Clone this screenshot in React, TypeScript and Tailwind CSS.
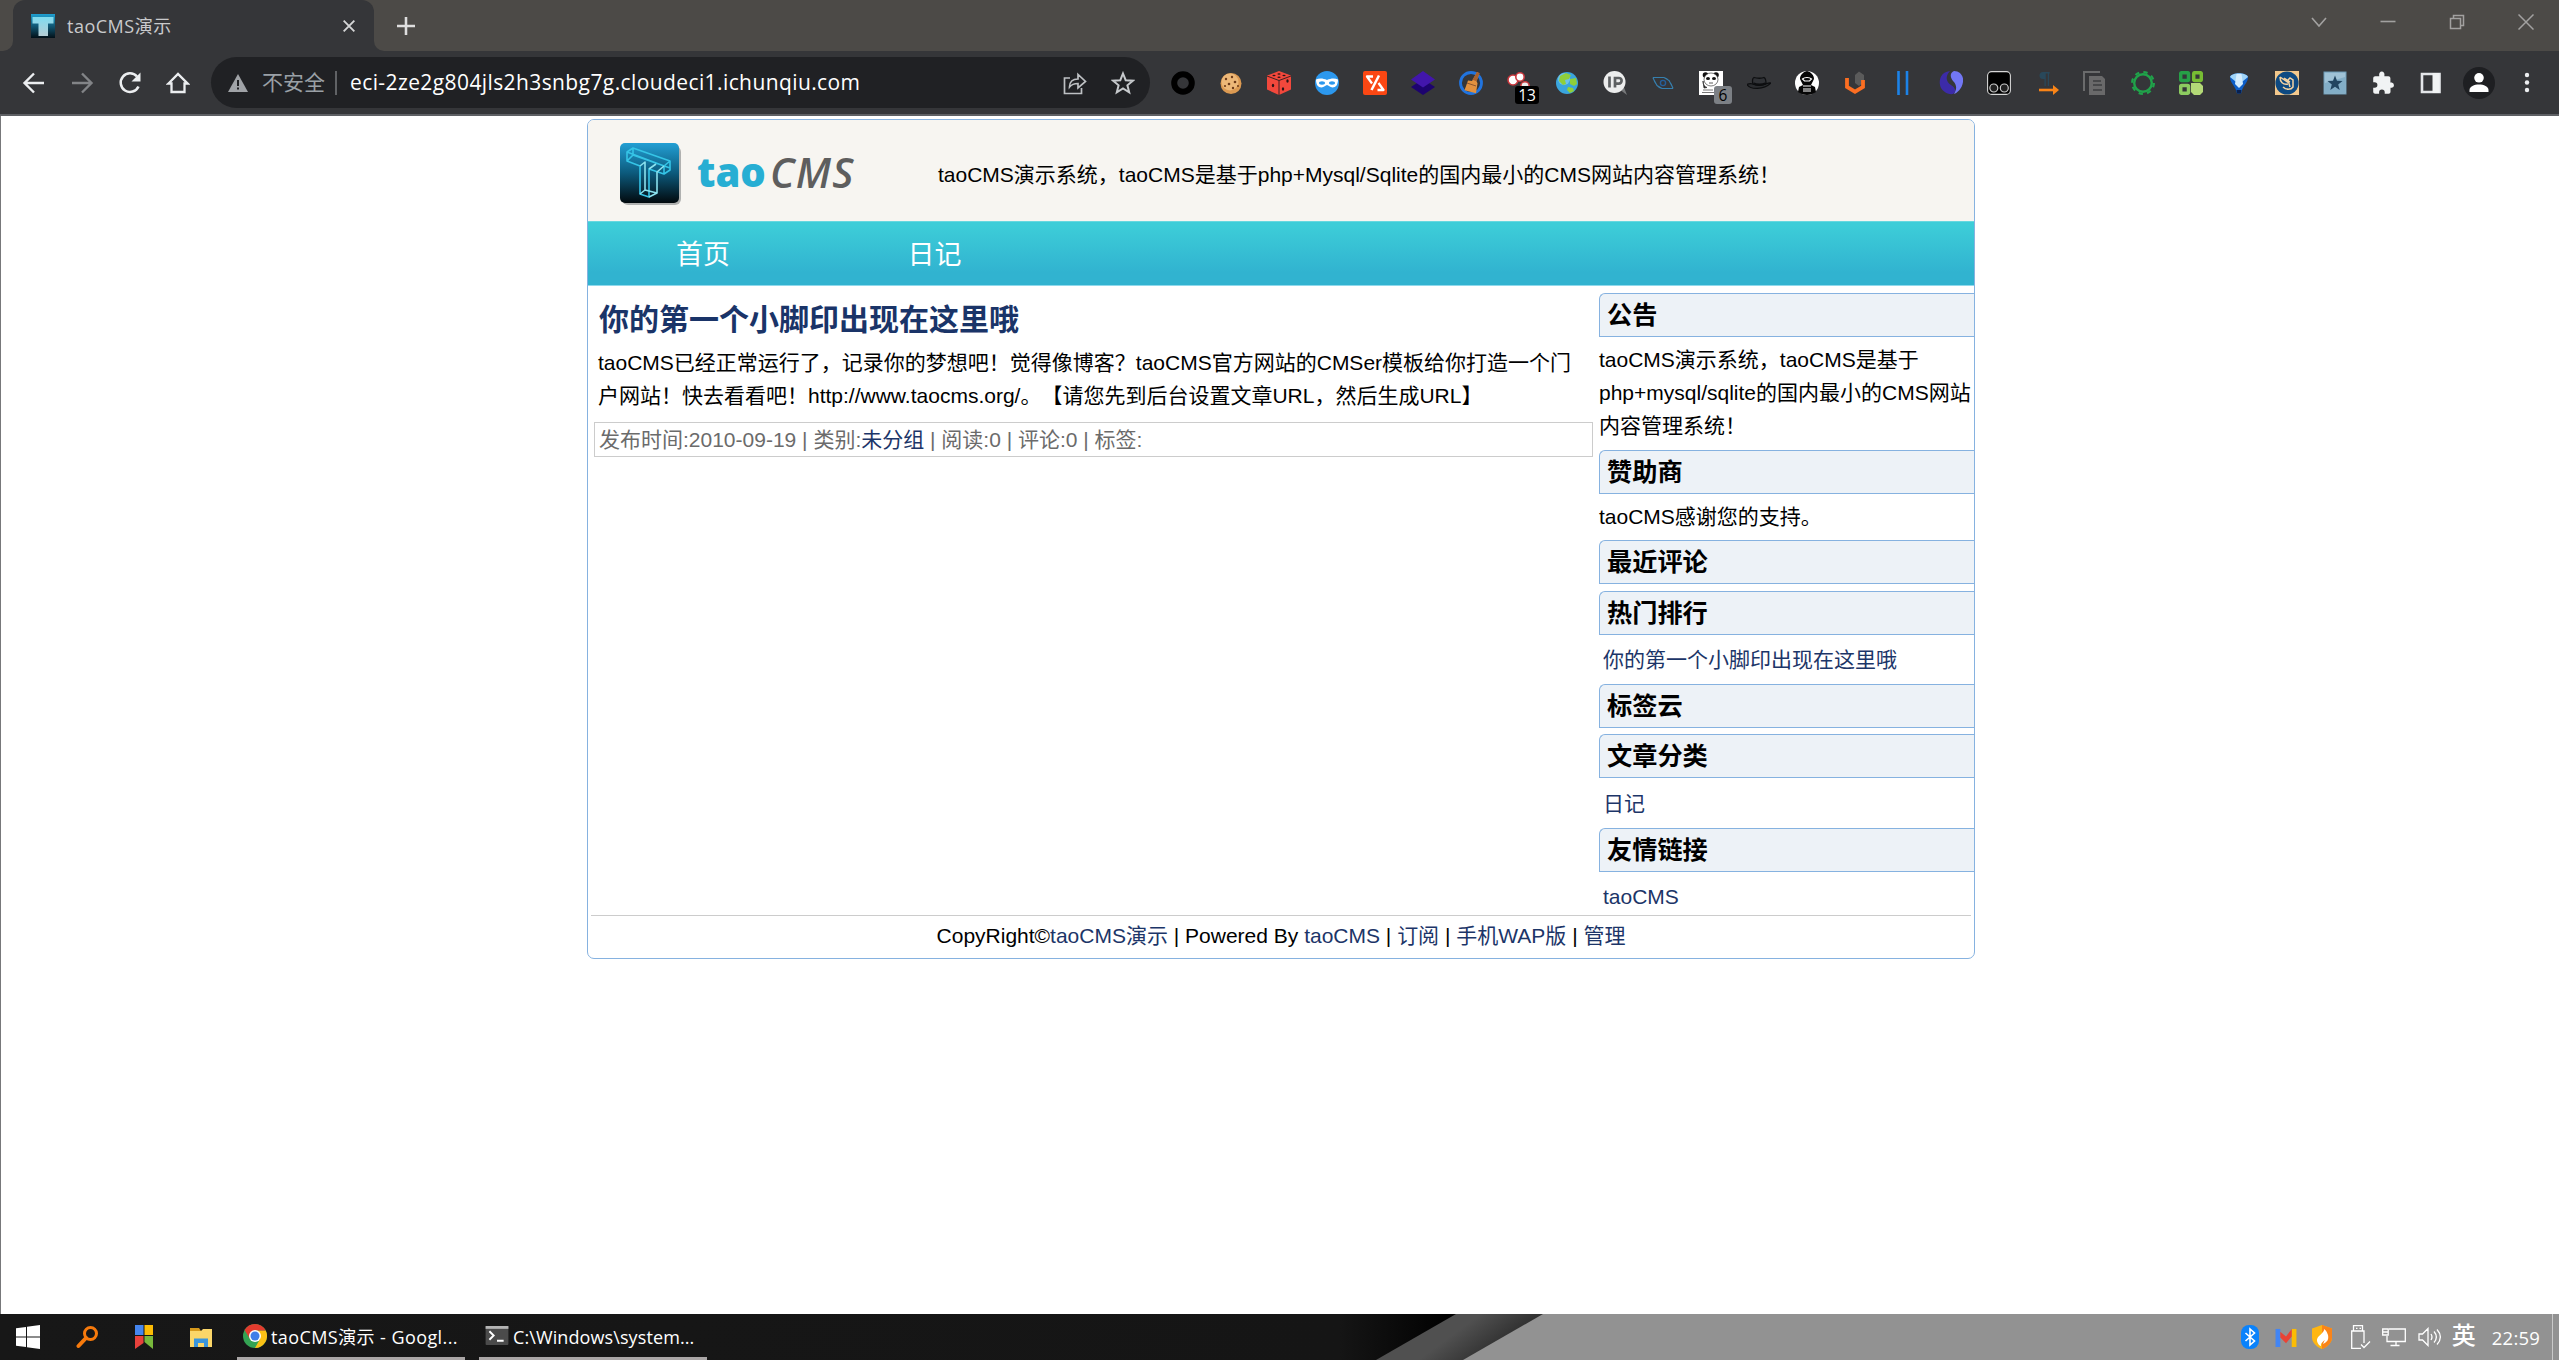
import React from "react";

const ui = "font-['Open_Sans','Noto_Sans_CJK_SC',sans-serif]";
const arial = "font-['Liberation_Sans','Noto_Sans_CJK_SC',sans-serif]";

function Icon({ children, className = "h-6 w-6" }: { children: React.ReactNode; className?: string }) {
  return (
    <svg viewBox="0 0 24 24" className={`${className} shrink-0`} fill="none">
      {children}
    </svg>
  );
}

function TabStrip() {
  return (
    <div className="flex h-[51px] bg-[#4c4a47]">
      <div className="flex w-[13px] items-end bg-[#353639]">
        <div className="h-full w-full rounded-br-[10px] bg-[#4c4a47]" />
      </div>
      <div className="flex w-[361px] items-center rounded-t-[12px] bg-[#353639] pl-[18px] pr-[17px]">
        <svg viewBox="0 0 24 24" className="h-6 w-6 shrink-0">
          <defs>
            <linearGradient id="fav" x1="0" y1="0" x2="0" y2="1">
              <stop offset="0" stopColor="#1f9fd0" />
              <stop offset="1" stopColor="#021018" />
            </linearGradient>
            <linearGradient id="favT" x1="0" y1="0" x2="0" y2="1">
              <stop offset="0" stopColor="#7fdcf0" />
              <stop offset="1" stopColor="#b5cdd5" />
            </linearGradient>
          </defs>
          <rect width="24" height="24" fill="url(#fav)" />
          <path d="M1.500 3h21v6.500H17V22H7.500V9.500h-6z" fill="url(#favT)" />
        </svg>
        <span className={`${ui} ml-3 mt-px text-[18px] leading-6 tracking-[0.5px] text-[#c9cacc]`}>taoCMS演示</span>
        <Icon className="ml-auto h-4 w-4">
          <path d="M4 4l16 16M20 4L4 20" stroke="#d5d6d7" strokeWidth="2.8" />
        </Icon>
      </div>
      <div className="flex w-[60px] bg-[#353639]">
        <div className="flex h-full w-full items-center rounded-bl-[10px] bg-[#4c4a47] pl-[23px]">
          <Icon className="h-[18px] w-[18px]">
            <path d="M12 0v24M0 12h24" stroke="#dedede" strokeWidth="3.4" />
          </Icon>
        </div>
      </div>
      <div className="ml-auto flex h-[43px] items-center gap-[53px] pr-[25px] text-[#a2a1a0]">
        <svg viewBox="0 0 16 16" className="h-4 w-4" fill="none" stroke="currentColor" strokeWidth="1.6"><path d="M1 4l7 8 7-8" /></svg>
        <svg viewBox="0 0 16 16" className="h-4 w-4" fill="none" stroke="currentColor" strokeWidth="1.6"><path d="M0.500 7.500h15" /></svg>
        <svg viewBox="0 0 16 16" className="h-4 w-4" fill="none" stroke="currentColor" strokeWidth="1.5"><path d="M1.500 4.500h10v10h-10zM4.500 4V1.500h10v10H12" /></svg>
        <svg viewBox="0 0 16 16" className="h-4 w-4" fill="none" stroke="currentColor" strokeWidth="1.5"><path d="M0.500 0.500l15 15M15.500 0.500l-15 15" /></svg>
      </div>
    </div>
  );
}

const extensions: React.ReactNode[] = [
  <Icon><circle cx="12" cy="12" r="8.800" stroke="#000" strokeWidth="6" /></Icon>,
  <Icon>
    <circle cx="12" cy="12.500" r="10.500" fill="#dc9a52" />
    <circle cx="11" cy="11" r="8.500" fill="#edb878" />
    <g fill="#6d3b1a"><circle cx="7" cy="8" r="1.200" /><circle cx="13" cy="6" r="1.200" /><circle cx="16" cy="11" r="1.300" /><circle cx="10" cy="13" r="1.300" /><circle cx="6" cy="15" r="1.100" /><circle cx="14" cy="17" r="1.200" /><circle cx="19" cy="15" r="1" /></g>
  </Icon>,
  <Icon>
    <path d="M12 0l12 4.500v14L12 24 0 18.500v-14z" fill="#f2483c" />
    <path d="M0 5l12 4.500L24 5M12 9.500V24" stroke="#3b2224" strokeWidth="1" />
    <g fill="#2c1416"><ellipse cx="7" cy="4.500" rx="1.600" ry=".8" /><ellipse cx="12" cy="3" rx="1.600" ry=".8" /><ellipse cx="12" cy="6.200" rx="1.600" ry=".8" /><ellipse cx="17" cy="4.500" rx="1.600" ry=".8" /><ellipse cx="6" cy="14.500" rx="1.200" ry="1.800" /><ellipse cx="16" cy="18" rx="1.200" ry="1.700" /><ellipse cx="20.500" cy="10" rx="1.200" ry="1.700" /></g>
  </Icon>,
  <Icon>
    <circle cx="12" cy="12" r="12" fill="#2c98ee" />
    <path d="M1 8.500c3-1.500 7-1.500 11 .5 4-2 8-2 11-.5 0 5-2 8-5.500 8-2.500 0-4-2.500-5.500-2.500S9 16.500 6.500 16.500C3 16.500 1 13.500 1 8.500z" fill="#fff" />
    <ellipse cx="7" cy="12" rx="3" ry="1.700" fill="#2c98ee" /><ellipse cx="17" cy="12" rx="3" ry="1.700" fill="#2c98ee" />
  </Icon>,
  <Icon>
    <rect width="24" height="24" rx="2" fill="#fb4713" />
    <path d="M10 5.500H4l5 7M14.500 19h6l-5-7" stroke="#fff" strokeWidth="2.300" strokeLinejoin="round" /><path d="M16 4.500L8.500 19" stroke="#fff" strokeWidth="2.500" />
  </Icon>,
  <Icon>
    <path d="M12 8l12 8-12 8-12-8z" fill="#1d036f" /><path d="M12 0l12 8.500-12 8-12-8z" fill="#4216ac" />
  </Icon>,
  <Icon>
    <circle cx="12" cy="12" r="10.500" stroke="#2174df" strokeWidth="2.800" />
    <path d="M18 1l2.500 1.200-3 8 1 2-1.500 10-11.500-3L9 9.500l4 .5z" fill="#e1913f" /><path d="M18 1l2.500 1.200-3 8-4-1.500z" fill="#a8612f" /><path d="M8 12l9 3" stroke="#8d5630" />
  </Icon>,
  <div className="relative flex">
    <Icon>
      <circle cx="6" cy="9" r="5" fill="#fff" stroke="#c9383e" strokeWidth="1.600" /><circle cx="13" cy="6" r="4.200" fill="#fff" stroke="#c9383e" strokeWidth="1.600" /><circle cx="18" cy="15" r="4.200" fill="#eee" stroke="#c9383e" strokeWidth="1.600" />
    </Icon>
    <span className={`${ui} absolute left-[8px] top-[15px] h-[18px] w-6 rounded-[3px] bg-black text-center text-[15.500px] font-medium leading-[18px] text-white`}>13</span>
  </div>,
  <Icon>
    <circle cx="12" cy="12" r="11" fill="#3aa5dd" /><circle cx="9" cy="8" r="6" fill="#8fd6f3" opacity=".6" />
    <path d="M5 5l6-3 5 2-2 4-4 1 1 4-3 1-4-4zM15 8l6-1 1 6-3 2-4-2zM13 16l5 1 1 3-4 2-3-3z" fill="#8fcf3a" />
  </Icon>,
  <Icon>
    <path d="M16 18l8 6-4-10z" fill="#77797b" /><circle cx="11.500" cy="11" r="11" fill="#eceded" />
    <path d="M6.500 5.500v11M12 16.500V7h3.800a2.800 2.800 0 010 5.600H12" stroke="#5d6062" strokeWidth="2.700" />
  </Icon>,
  <Icon>
    <path d="M2 6.500h11l5 3 4 7.500M22 17.500H11l-5-3L2 7M2 6.500c2 6 4 10 9 11M22 17.500c-2-6-4-10-9-11" stroke="#367fae" strokeWidth="1.100" /><circle cx="12" cy="12" r="2.600" stroke="#265f9a" strokeWidth="1.400" />
  </Icon>,
  <div className="relative flex">
    <Icon>
      <rect width="24" height="24" fill="#fff" /><circle cx="6.500" cy="4" r="2.800" fill="#111" /><circle cx="17" cy="4" r="2.800" fill="#111" /><ellipse cx="12" cy="8.500" rx="7" ry="6.500" fill="#fff" stroke="#444" strokeWidth=".7" />
      <ellipse cx="9" cy="7.500" rx="2" ry="1.500" fill="#111" /><ellipse cx="15" cy="7.500" rx="2" ry="1.500" fill="#111" /><path d="M4 10c0 4 2 6 4 6.500L5 17zM10 12h4" fill="#111" stroke="#333" strokeWidth=".8" /><path d="M4 19h10M3 21.500h12" stroke="#777" />
    </Icon>
    <span className={`${ui} absolute left-[15px] top-[15px] h-[18px] w-[18px] rounded-[3px] bg-[#7c8085] text-center text-[15.500px] font-medium leading-[18px] text-black`}>6</span>
  </div>,
  <Icon>
    <path d="M0 13.500c3 5.500 17 5.500 24-1.500-2-.5-4 .5-6 1-3 1-9 1-12 0-2-.5-4-.5-6 .5z" fill="#2a2c2f" stroke="#0d0e10" strokeWidth="1.200" /><path d="M6 13c-1-3-.5-6 1-6.500 3 1 8 1 10 0 2 1 2 4 2 6-3 2-9 2.500-13 .5z" stroke="#0d0e10" strokeWidth="1.300" fill="#303236" /><path d="M6.500 12.500c3 1.500 9 1.500 12 0" stroke="#0d0e10" strokeWidth="2.500" />
  </Icon>,
  <Icon>
    <circle cx="12" cy="12" r="12" fill="#fff" /><path d="M12 0c-4 1-7 4-7 8l3 6-4 2-1 5c5 4 13 4 18 0l-1-5-4-2 3-6c0-4-3-7-7-8z" fill="#060606" /><path d="M7.500 8c2-2 7-2 9 0l-2 2h-5zM8 18h8M8 15h8" stroke="#fff" strokeWidth="1.200" /><path d="M8 20h8" stroke="#fff" strokeWidth="1" />
  </Icon>,
  <Icon>
    <path d="M12 4l4-3.500L21 4v7l-5 4-4-3z" fill="#5b5b5b" /><path d="M4 7v9l8 4.700 8-4.700V9" stroke="#fb6e22" strokeWidth="3.800" />
  </Icon>,
  <Icon><path d="M7.500 0v24M16 0v24" stroke="#1c83e8" strokeWidth="2.600" /></Icon>,
  <Icon>
    <path d="M11 0C2 1 0 8 1 14c1 6 8 10 13 9 4-2 2-7-2-9-5-3-6-9-1-14z" fill="#3c2ba8" /><path d="M15 0c6 0 10 5 9 11-1 7-6 11-9 12 3-5 3-9-1-13-4-5-2-9 1-10z" fill="#7277f5" />
  </Icon>,
  <Icon>
    <rect x=".6" y=".6" width="22.800" height="22.800" rx="4" fill="#000" stroke="#d7d7d7" strokeWidth="1.100" /><circle cx="6.800" cy="17" r="4" stroke="#c9c9c9" strokeWidth="1.200" fill="#222" /><circle cx="17.300" cy="17" r="4" stroke="#c9c9c9" strokeWidth="1.200" fill="#222" />
  </Icon>,
  <Icon>
    <path d="M14.500 1H8a3.500 3.500 0 000 7h1.500V15h1.300V2.500h2V15H14V2.500h1z" fill="#29485a" /><path d="M4 19h15" stroke="#f98417" strokeWidth="2.600" /><path d="M18 14l6 5-6 5z" fill="#f98417" />
  </Icon>,
  <Icon>
    <path d="M1 20V1h16" stroke="#6a6b6c" strokeWidth="2" /><path d="M6 5h13l3 3v16H6z" fill="#69696a" /><path d="M10 10h8M10 14h9M10 19h9" stroke="#3d3e40" strokeWidth="1.600" />
  </Icon>,
  <Icon>
    <circle cx="12" cy="12" r="8.800" stroke="#20a34a" strokeWidth="2.400" /><circle cx="12" cy="12" r="10.900" stroke="#20a34a" strokeWidth="2.200" strokeDasharray="4.300 4.270" />
  </Icon>,
  <Icon>
    <rect x="1.700" y="1.700" width="7.800" height="7.800" rx="1" stroke="#26a047" strokeWidth="3.500" /><rect x="14.700" y="1.700" width="7.600" height="7.800" rx="1" stroke="#77bd33" strokeWidth="3.500" /><rect x="1.700" y="14.500" width="7.800" height="7.800" rx="1" stroke="#8ccb60" strokeWidth="3.500" /><path d="M12 12h9l3 3v6l-3 3h-6l-3-3z" fill="#b3d977" />
  </Icon>,
  <Icon>
    <path d="M3 6c2-5 16-5 18 0 0 5-4 8-6 13l-1 3.500h-4L9 19C7 14 3 11 3 6z" fill="#0d5ec8" /><path d="M3 6c2-5 16-5 18 0l-5.500 4.500h-7z" fill="#9fd4f8" /><path d="M8 13l1.500-10h5L16 13l-4 4z" fill="#d3ecfd" /><path d="M9.500 19h5l-.6 3.500h-3.800z" fill="#082050" />
  </Icon>,
  <Icon>
    <rect width="24" height="24" fill="#f3c88c" /><circle cx="12" cy="12" r="11.600" fill="#0e4a82" /><path d="M5 6l9 6M5 6c0 5 3 8 8 7M8 16c3 3 8 3 10 0V9l-3-2-2 2 2 7M9 7l6 4" stroke="#f5d3a2" strokeWidth="1.500" />
  </Icon>,
  <Icon>
    <rect x="1" y="1" width="22" height="22" fill="#9fc2d6" stroke="#6d9ab5" /><path d="M2 12L22 6v16H2z" fill="#83aec7" /><path d="M12 4.500l2 5.300 5.500.2-4.300 3.500 1.500 5.500-4.700-3.200L7.300 19l1.500-5.500L4.500 10l5.500-.2z" fill="#224560" />
  </Icon>,
  <Icon>
    <path d="M19.800 11.500h-1.400V7.200c0-1-.9-1.900-2-1.900h-4V4a2.700 2.700 0 10-5.200 0v1.300h-4c-1.100 0-2 .9-2 2v3.900h1.400a2.800 2.800 0 010 5.600H1.200v4c0 1 .9 2 2 2h3.900v-1.500a2.800 2.800 0 015.600 0v1.500h3.900c1.100 0 1.900-.9 1.900-2v-4h1.300a2.700 2.700 0 000-5.300z" fill="#f1f3f4" transform="translate(1 0)" />
  </Icon>,
  <Icon><path d="M3 3h17.500v18H3z" stroke="#e4e6e9" strokeWidth="2.600" /><path d="M13.500 2h7v20h-7z" fill="#f1f3f4" /></Icon>,
  <div className="flex h-8 w-8 items-center justify-center rounded-full bg-[#1e1f22]">
    <Icon><circle cx="12" cy="6.800" r="4.800" fill="#fff" /><path d="M2.500 21v-2c0-7.500 19-7.500 19 0v2z" fill="#fff" /></Icon>
  </div>,
  <Icon><g fill="#eceef0"><circle cx="12" cy="4" r="2.200" /><circle cx="12" cy="11.500" r="2.200" /><circle cx="12" cy="19" r="2.200" /></g></Icon>,
];

function Toolbar() {
  return (
    <div className="flex h-[65px] items-center border-b-2 border-[#5e6064] bg-[#353639] pl-[22px]">
      <div className="flex w-[189px] gap-6">
        <Icon><path d="M22 12H3M12 2.500L2.500 12l9.500 9.500" stroke="#eceef0" strokeWidth="2.400" /></Icon>
        <Icon><path d="M2 12h19M12 2.500l9.500 9.500-9.500 9.500" stroke="#828487" strokeWidth="2.400" /></Icon>
        <Icon><path d="M20.500 15.500A9.300 9.300 0 1119 5.500" stroke="#eceef0" strokeWidth="2.500" /><path d="M22.500 1.500v9h-9z" fill="#eceef0" /></Icon>
        <Icon><path d="M2.500 12.500L12 3l9.500 9.500H18.500V21h-13v-8.500z" stroke="#eceef0" strokeWidth="2.300" /></Icon>
      </div>
      <div className="flex h-[51px] w-[939px] items-center rounded-full bg-[#202124] pl-[17px] pr-[15px]">
        <svg viewBox="0 0 20 18" className="h-[18px] w-5 shrink-0"><path d="M10 0l10 18H0z" fill="#a0a3a7" /><path d="M9 6h2v6H9zM9 13.500h2v2H9z" fill="#202124" /></svg>
        <span className={`${ui} -mt-px ml-[14px] text-[21px] leading-7 text-[#9aa0a6]`}>不安全</span>
        <div className="ml-[10px] h-6 w-[2px] bg-[#606265]" />
        <span className={`${ui} -mt-px ml-[13px] text-[21px] leading-7 tracking-[0.4px] text-white`}>eci-2ze2g804jls2h3snbg7g.cloudeci1.ichunqiu.com</span>
        <div className="ml-auto flex gap-6">
          <Icon><path d="M7 7H1.500v15.500h17V17M6.500 16c0-5 3-8 8.500-8V3.500l7.500 7-7.500 6.500v-4.500c-4 0-6.500 1-8.500 3.500z" stroke="#bdc0c3" strokeWidth="1.700" /></Icon>
          <Icon><path d="M12 2.500l2.700 6.700 7.200.5-5.500 4.600 1.800 7L12 17.500l-6.200 3.800 1.800-7L2.100 9.700l7.200-.5z" stroke="#c6c9cc" strokeWidth="2" /></Icon>
        </div>
      </div>
      <div className="ml-[9px] flex">
        {extensions.map((icon, i) => (
          <div key={i} className="flex h-[51px] w-12 items-center justify-center">{icon}</div>
        ))}
      </div>
    </div>
  );
}

function Logo() {
  return (
    <div className="flex w-[350px] items-center pl-[31px]">
      <svg viewBox="0 0 62 64" className="h-16 w-[62px] shrink-0" fill="none">
        <defs>
          <linearGradient id="lg" x1="0" y1="0" x2="0" y2="1">
            <stop offset="0" stopColor="#239fd4" /><stop offset=".5" stopColor="#0c5a7c" /><stop offset="1" stopColor="#02090d" />
          </linearGradient>
        </defs>
        <rect x="3" y="4" width="59" height="59" rx="6" fill="#77797a" opacity=".55" />
        <rect x="1" y="1" width="59" height="60" rx="5" fill="url(#lg)" />
        <g stroke="#35c4e6" strokeWidth="1.600" strokeLinejoin="round">
          <path d="M8 10l6-4 37 13-6 5zM8 10v9l13 5v28l9 3V27l15 5v-8M51 19v9l-6 4M14 6v7l37 13M8 19l6-6" />
          <path d="M21 24l5-4v28l-5 4M26 48l12 3-8 4M38 51V30l7-6M30 27l7-5" stroke="#8be1ee" />
        </g>
      </svg>
      <span className="-mt-[4px] ml-[16px] w-[71px] whitespace-nowrap font-['Open_Sans',sans-serif] text-[40px] font-extrabold leading-[48px] text-[#27aed3]">tao</span>
      <span className="-mt-[4px] ml-[2px] font-['Open_Sans',sans-serif] text-[41px] font-semibold italic leading-[48px] tracking-[1.2px] text-[#5e5e5e]">CMS</span>
    </div>
  );
}

function SideBox({ title, className, children }: { title: string; className: string; children?: React.ReactNode }) {
  return (
    <section className={className}>
      <h2 className="h-11 rounded-tl-[6px] border-y border-l border-[#86b2e0] bg-[#edf2f7] pl-[7px] text-[25.200px] font-bold leading-[42px]">{title}</h2>
      {children}
    </section>
  );
}

const Link = ({ children }: { children: React.ReactNode }) => <a className="text-[#1c3568]">{children}</a>;

function Site() {
  return (
    <div className={`${arial} ml-[587px] mt-[3px] h-[840px] w-[1388px] overflow-hidden rounded-[7px] border border-[#86b2e0] bg-white text-[21px] leading-[33px] text-black [text-spacing-trim:space-all]`}>
      <header className="flex h-[101px] items-center bg-[#f7f5f1] pb-px pt-[8px]">
        <Logo />
        <p className="whitespace-nowrap">taoCMS演示系统，taoCMS是基于php+Mysql/Sqlite的国内最小的CMS网站内容管理系统！</p>
      </header>
      <nav className="flex h-[65px] border-b border-t border-b-[#8fd9ec] border-t-[#66d8df] bg-linear-to-b from-[#3dcdd8] from-5% to-[#31b3d0] to-80% text-[27px] leading-[67px] text-white">
        <a className="w-[230px] text-center">首页</a>
        <a className="w-[233px] text-center">日记</a>
      </nav>
      <div className="flex h-[629px]">
        <main className="w-[1011px] pl-[6px] pt-[12px]">
          <h1 className="pl-[5px] text-[30px] font-bold leading-[44px] text-[#1a3468]">你的第一个小脚印出现在这里哦</h1>
          <p className="mt-1 whitespace-nowrap pl-1">
            taoCMS已经正常运行了，记录你的梦想吧！觉得像博客？taoCMS官方网站的CMSer模板给你打造一个门
            <br />
            户网站！快去看看吧！http://www.taocms.org/。【请您先到后台设置文章URL，然后生成URL】
          </p>
          <div className="mt-[10px] h-[35px] w-[999px] border border-[#cccccc] pl-1 text-[#6b6b6b]">
            发布时间:2010-09-19 | 类别:<Link>未分组</Link> | 阅读:0 | 评论:0 | 标签:
          </div>
        </main>
        <aside className="w-[375px] pt-[7px]">
          <SideBox title="公告" className="h-[157px]">
            <p className="whitespace-nowrap pt-[6px]">
              taoCMS演示系统，taoCMS是基于<br />php+mysql/sqlite的国内最小的CMS网站<br />内容管理系统！
            </p>
          </SideBox>
          <SideBox title="赞助商" className="h-[90px]"><p className="pt-[6px]">taoCMS感谢您的支持。</p></SideBox>
          <SideBox title="最近评论" className="h-[51px]" />
          <SideBox title="热门排行" className="h-[93px]"><p className="pl-1 pt-[8px]"><Link>你的第一个小脚印出现在这里哦</Link></p></SideBox>
          <SideBox title="标签云" className="h-[50px]" />
          <SideBox title="文章分类" className="h-[94px]"><p className="pl-1 pt-[9px]"><Link>日记</Link></p></SideBox>
          <SideBox title="友情链接" className="h-[87px]"><p className="pl-1 pt-[8px]"><Link>taoCMS</Link></p></SideBox>
        </aside>
      </div>
      <footer className="mx-[3px] border-t border-[#cccccc] pt-[3px] text-center">
        CopyRight©<Link>taoCMS演示</Link> | Powered By <Link>taoCMS</Link> | <Link>订阅</Link> | <Link>手机WAP版</Link> | <Link>管理</Link>
      </footer>
    </div>
  );
}

function Taskbar() {
  return (
    <footer className={`${ui} relative flex h-[46px] bg-[#929292] text-[18px] text-white`}>
      <svg className="absolute left-0 top-0 h-[46px] w-[1544px]" viewBox="0 0 1544 46">
        <defs>
          <linearGradient id="tb" x1="0" x2="1"><stop offset="0" stopColor="#171717" /><stop offset=".92" stopColor="#151515" /><stop offset="1" stopColor="#000" /></linearGradient>
          <linearGradient id="band" gradientUnits="userSpaceOnUse" x1="1416" y1="15" x2="1455" y2="68"><stop offset="0" stopColor="#505050" /><stop offset=".4" stopColor="#505050" /><stop offset="1" stopColor="#2e2e2e" /></linearGradient>
        </defs>
        <path d="M0 0h1543l-80 46H0z" fill="url(#band)" />
        <path d="M0 0h1456l-80 46H0z" fill="url(#tb)" />
      </svg>
      <div className="relative flex w-full items-center">
        <svg viewBox="0 0 24 24" className="ml-4 h-6 w-6" fill="#fff"><path d="M0 3.300L10 2v9.400H0zM11 1.800L24 0v11.400H11zM0 12.400h10V22L0 20.700zM11 12.400h13V24l-13-1.800z" /></svg>
        <svg viewBox="0 0 24 24" className="ml-9 h-6 w-6" fill="none" stroke="#f77a0c"><circle cx="14.500" cy="8.500" r="6" strokeWidth="3" /><path d="M10 13l-7.500 8" strokeWidth="4" strokeLinecap="round" /></svg>
        <svg viewBox="0 0 18 24" className="ml-[35px] h-6 w-[18px]"><path d="M0 0h8.500v10H0z" fill="#4586ef" /><path d="M9.500 0H18v10H9.500z" fill="#fbbc05" /><path d="M0 11h8.500v7L0 24z" fill="#e8413c" /><path d="M9.500 11H18v13l-8.500-7z" fill="#78b93c" /></svg>
        <svg viewBox="0 0 24 24" className="ml-[36px] h-6 w-6"><path d="M1 3h9l2 3H1z" fill="#d79a1c" /><path d="M1 6h11l2-2h9v18H1z" fill="#fbd669" /><path d="M5 22v-8.500h14V22h-4v-4H9v4z" fill="#3a95dc" /></svg>
        <div className="ml-6 flex h-full w-[228px] items-center border-b-[3px] border-[#aaa6a6] pl-[6px]">
          <svg viewBox="0 0 24 24" className="h-6 w-6 shrink-0">
            <circle cx="12" cy="12" r="12" fill="#34a353" /><path d="M12 6.500h10.700A12 12 0 0112 24l5-9z" fill="#fbc116" /><path d="M12 0A12 12 0 001.600 6L7 15l5-8.500h10.600A12 12 0 0012 0z" fill="#e33b2e" /><circle cx="12" cy="12" r="6" fill="#fff" /><circle cx="12" cy="12" r="4.500" fill="#3f7fe8" />
          </svg>
          <span className="ml-1 mt-[3px] whitespace-nowrap tracking-[0.42px]">taoCMS演示 - Googl...</span>
        </div>
        <div className="ml-[14px] flex h-full w-[228px] items-center border-b-[3px] border-[#aaa6a6] pl-[6px]">
          <svg viewBox="0 0 24 20" className="h-[19px] w-6 shrink-0"><rect width="24" height="20" rx="1" fill="#4b4b4b" /><path d="M0 0h24v3H0z" fill="#b4b4b4" /><path d="M4 5.500l4.500 4.500L4 14.500M12 15.500h7" stroke="#fff" strokeWidth="2" fill="none" /></svg>
          <span className="ml-1 mt-[3px] whitespace-nowrap tracking-[0.1px]">C:\Windows\system...</span>
        </div>
        <div className="ml-auto flex h-full items-center pr-[6px]">
          <svg viewBox="0 0 18 24" className="h-6 w-[18px]" fill="none"><rect width="18" height="24" rx="8" fill="#0a82fb" /><path d="M4.500 8l9 8-4.500 4V4l4.500 4-9 8" stroke="#fff" strokeWidth="1.600" /></svg>
          <svg viewBox="0 0 22 20" className="ml-4 h-[19px] w-[22px]"><path d="M0 1h5v19H0z" fill="#4285f4" /><path d="M17 1h5v19h-5z" fill="#fbbc04" /><path d="M5 4l6 5 6-8v8l-6 7-6-6z" fill="#ea4335" /></svg>
          <svg viewBox="0 0 20 24" className="ml-[15px] h-6 w-5"><path d="M10 0l10 3.500v9C20 18 15 22 10 24 5 22 0 18 0 12.500v-9z" fill="#ffb612" /><path d="M10 0l10 3.500v9C20 18 15 22 10 24z" fill="#fa8419" /><path d="M12 4c1 4-8 7-7 12 .5 3 3 5 4 5-1-4 5-5 5-9l-3 7c4-2 6-4 5-9-1-2-1-4-4-6z" fill="#fff" /></svg>
          <svg viewBox="0 0 20 24" className="ml-[19px] h-6 w-5" fill="none" stroke="#fff" strokeWidth="1.300"><path d="M2.500 6V.7h9V6M10 23.300H.7V6H13v12M10 19.500l3 3 6-6" /><path d="M5 3.300h1.500M8.500 3.300H10" /></svg>
          <svg viewBox="0 0 24 20" className="ml-[11px] h-5 w-6" fill="none" stroke="#fff" strokeWidth="1.300"><path d="M7 2h16.300v12.500H5V9M14 14.500V18M8.500 18.500h9M.7 2h5.500v6H.7zM.7 5H6" /></svg>
          <svg viewBox="0 0 24 20" className="ml-3 h-5 w-6" fill="none" stroke="#fff" strokeWidth="1.300"><path d="M1 7h3.500L10 1.500v17L4.500 13H1zM13 7c1.300 2 1.300 4 0 6M16 4.500c3 3.500 3 7.500 0 11M19 2.500c4.500 5 4.500 10 0 15" /></svg>
          <span className="-mt-1 ml-[10px] text-[24px] font-medium leading-7">英</span>
          <span className="ml-[16px] mt-px text-[18.500px] tracking-[0.2px]">22:59</span>
          <div className="ml-3 h-full w-px bg-[#c9c9c9]" />
        </div>
      </div>
    </footer>
  );
}

export default function App() {
  return (
    <div className="flex h-[1360px] w-[2559px] flex-col overflow-hidden bg-white">
      <TabStrip />
      <Toolbar />
      <div className="grow border-l border-[#77787a]">
        <div className="-ml-px">
          <Site />
        </div>
      </div>
      <Taskbar />
    </div>
  );
}
